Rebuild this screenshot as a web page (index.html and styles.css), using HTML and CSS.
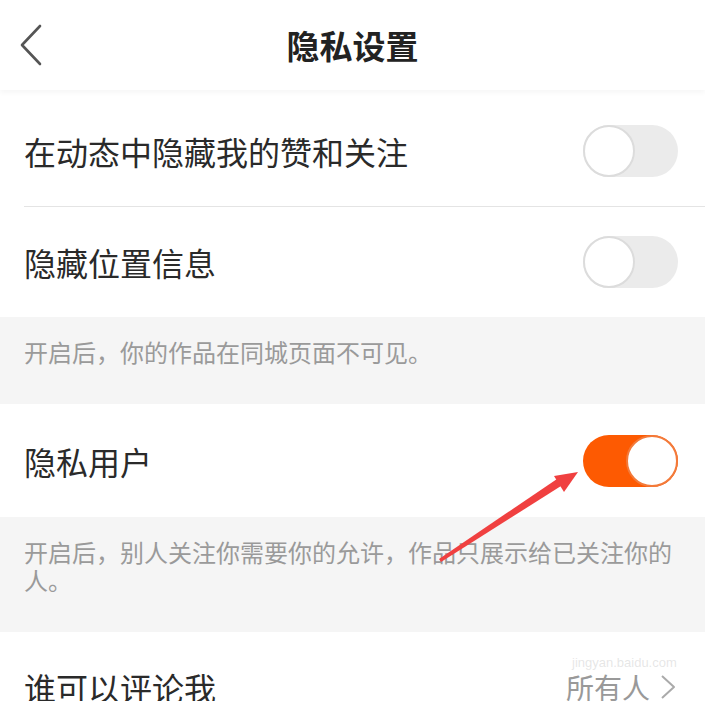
FILE: index.html
```html
<!DOCTYPE html>
<html lang="zh-CN">
<head>
    <meta charset="UTF-8" />
    <meta name="viewport" content="width=device-width, initial-scale=1.0" />
    <title>隐私设置</title>
    <link rel="stylesheet" href="styles.css">
</head>
<body>
    <header class="top-bar">
        <svg class="back" width="30" height="44" viewBox="0 0 30 44">
            <polyline points="22,3 4,22 22,41" fill="none" stroke="#555" stroke-width="2.6" stroke-linecap="round" stroke-linejoin="round" />
        </svg>
        <h1>隐私设置</h1>
    </header>

    <main>
        <div class="row">
            <span class="label">在动态中隐藏我的赞和关注</span>
            <span class="switch"></span>
        </div>
        <div class="divider"></div>
        <div class="row">
            <span class="label">隐藏位置信息</span>
            <span class="switch"></span>
        </div>
        <p class="note">开启后，你的作品在同城页面不可见。</p>

        <div class="row row-tall">
            <span class="label">隐私用户</span>
            <span class="switch on"></span>
        </div>
        <p class="note">开启后，别人关注你需要你的允许，作品只展示给已关注你的人。</p>

        <div class="row">
            <span class="label">谁可以评论我</span>
            <span class="value">所有人
                <svg width="20" height="28" viewBox="0 0 20 28">
                    <polyline points="4,3 16,14 4,25" fill="none" stroke="#aaa" stroke-width="2" stroke-linejoin="round" />
                </svg>
            </span>
        </div>
    </main>

    <!-- annotation arrow drawn over the screenshot -->
    <svg class="arrow" width="705" height="701" viewBox="0 0 705 701">
        <polygon points="439,559 441,562 561,486 557,479" fill="#f04040" />
        <polygon points="578,472 564,492 554,476" fill="#f04040" />
    </svg>
    <span class="watermark">jingyan.baidu.com</span>
</body>
</html>
```

FILE: styles.css
```css
body {
    margin: 0;
    width: 705px;
    height: 701px;
    overflow: hidden;
    position: relative;
    background: #fff;
    font-family: "Noto Sans CJK SC", "Noto Sans", sans-serif;
    color: #222;
}
.top-bar {
    height: 90px;
    display: flex;
    align-items: center;
    justify-content: center;
    position: relative;
    box-shadow: 0 3px 5px rgba(0, 0, 0, 0.035);
}
.top-bar .back {
    position: absolute;
    left: 18px;
    top: 23px;
}
.top-bar h1 {
    margin: 0;
    font-size: 33px;
    font-weight: 700;
    color: #222;
}
main { padding-top: 6px; }
.row {
    height: 110px;
    display: flex;
    align-items: center;
    justify-content: space-between;
    padding: 0 27px 0 24px;
}
.row-tall { height: 113px; }
.label {
    font-size: 32px;
    color: #2a2a2a;
}
.divider {
    height: 1px;
    margin-left: 24px;
    background: #e4e4e4;
}
.switch {
    width: 95px;
    height: 52px;
    border-radius: 26px;
    background: #ebebeb;
    position: relative;
}
.switch::after {
    content: "";
    position: absolute;
    left: 0;
    top: 0;
    width: 52px;
    height: 52px;
    border-radius: 50%;
    background: #fff;
    border: 2px solid #dcdcdc;
    box-sizing: border-box;
}
.switch.on { background: #fd5a02; }
.switch.on::after {
    left: auto;
    right: 0;
    border-color: #f37a3a;
}
.note {
    margin: 0;
    background: #f5f5f5;
    padding: 21px 24px 38px;
    font-size: 24px;
    line-height: 28px;
    color: #9a9a9a;
}
.value {
    display: flex;
    align-items: center;
    gap: 8px;
    font-size: 28px;
    color: #999;
}
.arrow {
    position: absolute;
    left: 0;
    top: 0;
    pointer-events: none;
}
.watermark {
    position: absolute;
    left: 572px;
    top: 655px;
    font-family: "Liberation Sans", sans-serif;
    font-size: 13px;
    color: rgba(200, 200, 200, 0.45);
}
```
